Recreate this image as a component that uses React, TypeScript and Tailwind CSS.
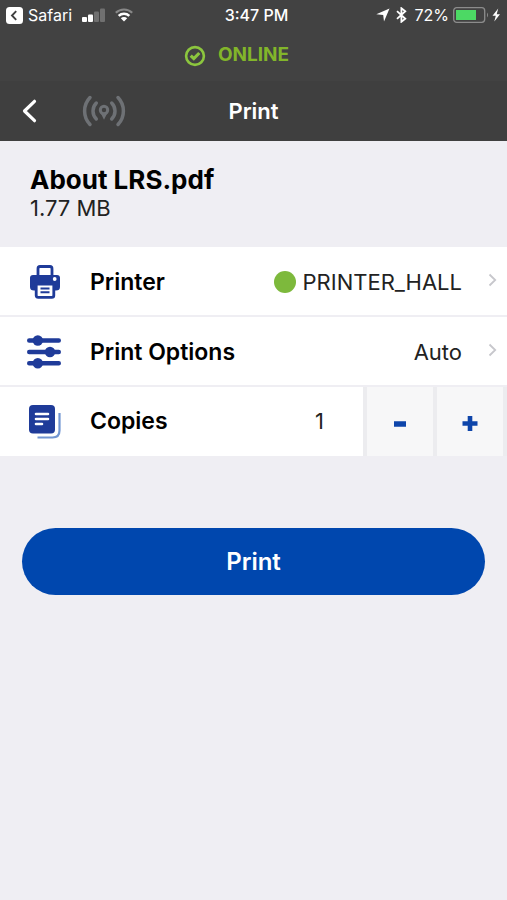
import { useState } from "react";

function BackToAppIcon() {
  return (
    <svg width="17" height="17" viewBox="0 0 17 17" aria-hidden="true">
      <rect width="17" height="17" rx="3.5" fill="#fff" />
      <path d="M10.2 4.2 6 8.5l4.2 4.3" fill="none" stroke="#3f3f3f" strokeWidth="1.9" />
    </svg>
  );
}

function SignalIcon() {
  return (
    <svg width="23" height="14" viewBox="0 0 23 14" aria-hidden="true">
      <rect x="0" y="9" width="5" height="5" rx="1" fill="#fff" />
      <rect x="6" y="6.500" width="5" height="7.500" rx="1" fill="#fff" />
      <rect x="12" y="3.500" width="5" height="10.500" rx="1" fill="#707070" />
      <rect x="18" y="0.500" width="5" height="13.500" rx="1" fill="#707070" />
    </svg>
  );
}

function WifiIcon() {
  return (
    <svg width="18" height="14" viewBox="0 0 18 14" fill="none" aria-hidden="true">
      <path d="M.8 4.800a11.800 11.800 0 0 1 16.400 0" stroke="#888" strokeWidth="2.200" />
      <path d="M3.700 7.800a7.700 7.700 0 0 1 10.600 0" stroke="#fff" strokeWidth="2.500" />
      <path d="M5.800 10.300a4.600 4.600 0 0 1 6.400 0L9 13.600z" fill="#fff" />
    </svg>
  );
}

function LocationIcon() {
  return (
    <svg width="14" height="14" viewBox="0 0 14 14" aria-hidden="true">
      <path d="M13.500.5 8 13.500 7.200 7 .3 6.200z" fill="#fff" />
    </svg>
  );
}

function BluetoothIcon() {
  return (
    <svg width="11" height="16" viewBox="0 0 11 16" fill="none" aria-hidden="true">
      <path d="m1 4.200 8.300 7.600-3.900 3V1.200l3.900 3L1 11.800" stroke="#fff" strokeWidth="1.800" />
    </svg>
  );
}

function BatteryIcon() {
  return (
    <svg width="48" height="16" viewBox="0 0 48 16" aria-hidden="true">
      <rect x=".7" y=".7" width="31" height="14.600" rx="3" fill="none" stroke="#8c8c8c" strokeWidth="1.300" />
      <rect x="3" y="3" width="20" height="10" fill="#4cd964" />
      <path d="M34 5.500q2 2.500 0 5z" fill="#8c8c8c" />
      <path d="m45.200 1.500-5.700 7.300h3.300L41.300 14.500 47 7.200h-3.300z" fill="#fff" />
    </svg>
  );
}

function OnlineIcon() {
  return (
    <svg width="22" height="22" viewBox="0 0 22 22" fill="none" stroke="#8cc63e" aria-hidden="true">
      <circle cx="11" cy="11" r="8.900" strokeWidth="2.600" />
      <path d="m6.700 10.600 3.100 3 5.500-5.600" strokeWidth="3.200" />
    </svg>
  );
}

function BeaconIcon() {
  return (
    <svg width="44" height="32" viewBox="0 0 44 32" fill="none" stroke="#6e7175" strokeWidth="3.500" strokeLinecap="round" aria-hidden="true">
      <path d="M8 2.500C.8 10 .8 22 8 29.500M36 2.500c7.200 7.500 7.200 19.500 0 27M14.300 8c-4.400 4.500-4.400 11.500 0 16M29.700 8c4.400 4.500 4.400 11.500 0 16" />
      <circle cx="22" cy="15" r="3.700" strokeWidth="3" />
      <path d="m20.300 19 1.700 3.500 1.700-3.500" strokeWidth="2" />
    </svg>
  );
}

function PrinterIcon() {
  return (
    <svg width="30" height="34" viewBox="0 0 30 34" aria-hidden="true">
      <path d="M8 12V3.800Q8 1.500 10 1.500h10q2 0 2 2.300V12" fill="none" stroke="#1f3b99" strokeWidth="2.800" />
      <path d="M3 10h24q3 0 3 3v9q0 3.500-4 3.500H4Q0 25.500 0 22v-9q0-3 3-3z" fill="#1f3b99" />
      <path d="M6.200 19h17.600v11.500q0 1.800-2 1.800H8.200q-2 0-2-1.800z" fill="#fff" stroke="#1f3b99" strokeWidth="2.800" />
      <path d="M10.500 23.500h9M10.500 27.300h9" stroke="#1f3b99" strokeWidth="1.900" />
      <circle cx="24.700" cy="14" r="1.900" fill="#fff" />
    </svg>
  );
}

function SlidersIcon() {
  return (
    <svg width="34" height="34" viewBox="0 0 34 34" fill="#1f3b99" aria-hidden="true">
      <path d="M2.200 5.500h29.600M2.200 17h29.600M2.200 28.300h29.600" stroke="#1f3b99" strokeWidth="4.400" strokeLinecap="round" />
      <circle cx="10.800" cy="5.500" r="5.200" />
      <circle cx="23" cy="17" r="5.200" />
      <circle cx="10.800" cy="28.300" r="5.200" />
    </svg>
  );
}

function CopiesIcon() {
  return (
    <svg width="34" height="34" viewBox="0 0 34 34" fill="none" aria-hidden="true">
      <rect x="2" y="0" width="26" height="28.500" rx="4" fill="#1f3b99" />
      <path d="M9 9h12M9 14h12M9 19h6" stroke="#fff" strokeWidth="2.600" strokeLinecap="round" />
      <path d="M32.500 8v17.500q0 7-7 7H10.500" stroke="#7296d2" strokeWidth="2.200" />
    </svg>
  );
}

function Chevron() {
  return (
    <svg className="-mt-1" width="9" height="14" viewBox="0 0 9 14" fill="none" aria-hidden="true">
      <path d="m1.500 1.500 5.700 5.500-5.700 5.500" stroke="#c7c7cc" strokeWidth="1.800" />
    </svg>
  );
}

export default function App() {
  const [copies, setCopies] = useState(1);

  return (
    <div className="flex min-h-screen flex-col bg-[#efeef3] font-['Inter',sans-serif] text-black">
      <header className="bg-[#424242] text-white">
        <div className="grid h-[30px] grid-cols-[1fr_auto_1fr] items-center px-1.5 text-base">
          <div className="flex items-center">
            <a href="#safari" className="flex items-center gap-[5px]">
              <BackToAppIcon />
              Safari
            </a>
            <span className="ml-2.5 flex items-center gap-2.5">
              <SignalIcon />
              <WifiIcon />
            </span>
          </div>
          <time className="pl-1.5 font-medium">3:47 PM</time>
          <div className="flex items-center justify-end gap-1.5">
            <LocationIcon />
            <BluetoothIcon />
            <span className="ml-px flex items-center gap-1">
              72%
              <BatteryIcon />
            </span>
          </div>
        </div>
        <div className="flex h-[51px] items-center justify-center gap-3 pr-[34px] text-[19px] font-bold text-[#82b52a]">
          <OnlineIcon />
          ONLINE
        </div>
        <nav className="grid h-[60px] grid-cols-[1fr_auto_1fr] items-center bg-[#3f3f3f]">
          <div className="flex items-center">
            <button type="button" aria-label="Back" className="pr-[42px] pl-5">
              <svg width="20" height="26" viewBox="0 0 20 26" fill="none" aria-hidden="true">
                <path d="M14.500 3.300 4.500 13l10 9.700" stroke="#fff" strokeWidth="3.200" strokeLinecap="round" strokeLinejoin="round" />
              </svg>
            </button>
            <button type="button" aria-label="Nearby printers">
              <BeaconIcon />
            </button>
          </div>
          <h1 className="text-[22px] font-semibold">Print</h1>
        </nav>
      </header>

      <main>
        <section className="h-[106px] px-[30px] pt-6">
          <h2 className="text-[26px] leading-[30px] font-bold">About LRS.pdf</h2>
          <p className="text-[22px] leading-[26px] text-[#222]">1.77 MB</p>
        </section>

        <ul className="divide-y-2 divide-[#efeef3] bg-white text-[22px]">
          <li>
            <button type="button" className="flex h-[68px] w-full items-center pt-0.5 pr-2.5 pl-[27px] text-left">
              <span className="flex w-[63px] justify-start pl-[3px]">
                <PrinterIcon />
              </span>
              <span className="flex-1 text-[23px] font-semibold">Printer</span>
              <span className="mr-[26px] flex items-center gap-[7px] text-[#222]">
                <span className="size-[22px] rounded-full bg-[#7db93c]" />
                PRINTER_HALL
              </span>
              <Chevron />
            </button>
          </li>
          <li>
            <button type="button" className="flex h-[68px] w-full items-center pt-0.5 pr-2.5 pl-[27px] text-left">
              <span className="w-[63px]">
                <SlidersIcon />
              </span>
              <span className="flex-1 text-[23px] font-semibold">Print Options</span>
              <span className="mr-[26px] text-[#222]">Auto</span>
              <Chevron />
            </button>
          </li>
          <li className="flex h-[69px] items-center pl-[27px]">
            <span className="w-[63px]">
              <CopiesIcon />
            </span>
            <label htmlFor="copies" className="flex-1 text-[23px] font-semibold">
              Copies
            </label>
            <input
              id="copies"
              type="text"
              inputMode="numeric"
              value={copies}
              onChange={(e) => setCopies(Number(e.target.value) || 1)}
              className="mr-[39px] w-16 bg-transparent text-right text-[#222] outline-none"
            />
            <div className="flex h-full gap-1 bg-[#ececef] px-1">
              <button
                type="button"
                aria-label="Fewer copies"
                onClick={() => setCopies(Math.max(1, copies - 1))}
                className="flex w-[66px] items-center justify-center bg-[#f7f7f8]"
              >
                <svg width="16" height="18" viewBox="0 0 16 18" aria-hidden="true">
                  <path d="M2 11h12" stroke="#0e45aa" strokeWidth="5.500" />
                </svg>
              </button>
              <button
                type="button"
                aria-label="More copies"
                onClick={() => setCopies(copies + 1)}
                className="flex w-[66px] items-center justify-center bg-[#f7f7f8]"
              >
                <svg width="16" height="18" viewBox="0 0 16 18" aria-hidden="true">
                  <path d="M.5 10.500h15M8 3v15" stroke="#0e45aa" strokeWidth="4.600" />
                </svg>
              </button>
            </div>
          </li>
        </ul>

        <div className="px-[22px] pt-[72px]">
          <button type="button" className="h-[67px] w-full rounded-full bg-[#0047ae] text-2xl font-semibold text-white">
            Print
          </button>
        </div>
      </main>
    </div>
  );
}
